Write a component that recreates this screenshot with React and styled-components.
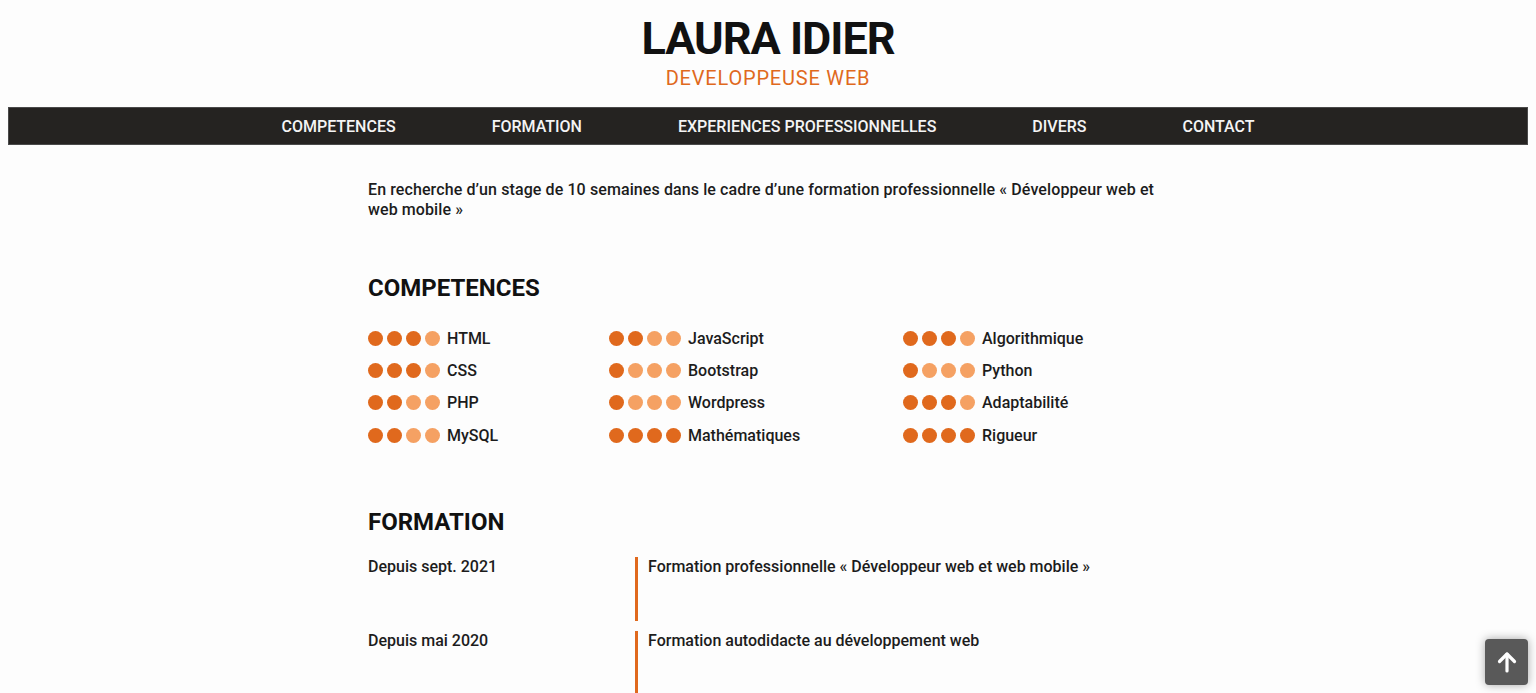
import React from 'react';
import styled, { createGlobalStyle } from 'styled-components';

const orange = '#e0691d';
const orangeLight = '#f5a163';
const ink = '#1c1c1c';

const GlobalStyle = createGlobalStyle`
  body {
    margin: 8px;
    background: #fdfdfd;
    color: ${ink};
    font-family: Roboto, "Liberation Sans", sans-serif;
  }
`;

const Header = styled.header`
  text-align: center;
`;

const Title = styled.h1`
  margin: 4px 0 0;
  font-size: 45px;
  line-height: 54px;
  font-weight: 700;
  color: #111;
  letter-spacing: -1px;
`;

const Subtitle = styled.h2`
  margin: 0;
  font-size: 20px;
  line-height: 24px;
  font-weight: 400;
  color: ${orange};
  letter-spacing: 0.8px;
`;

const Nav = styled.nav`
  margin-top: 17px;
  height: 38px;
  background: #252321;
  border: 1px solid #4a4a4a;
  box-sizing: border-box;
  display: flex;
  justify-content: center;
  align-items: center;
  gap: 96px;
`;

const NavLink = styled.a`
  color: #f4f4f4;
  font-size: 16px;
  font-weight: 500;
  text-decoration: none;
`;

const Main = styled.main`
  width: 800px;
  margin: 0 auto;
  padding-top: 35px;
  font-size: 16px;
  font-weight: 500;
`;

const Intro = styled.p`
  margin: 0;
  line-height: 20px;
  letter-spacing: 0.1px;
`;

const Section = styled.section`
  margin-top: 54px;
`;

const SectionTitle = styled.h3`
  margin: 0 0 20px;
  font-size: 24px;
  line-height: 28px;
  font-weight: 700;
  color: #111;
`;

const SkillsGrid = styled.div`
  display: grid;
  grid-template-columns: 241px 294px 1fr;
  padding-bottom: 2px;
`;

const SkillColumn = styled.ul`
  list-style: none;
  margin: 0;
  padding: 0;
`;

const SkillRow = styled.li`
  display: flex;
  align-items: center;
  height: 32.4px;
`;

const Dots = styled.span`
  display: flex;
  gap: 4px;
  margin-right: 7px;
`;

const Dot = styled.span`
  width: 15px;
  height: 15px;
  border-radius: 50%;
  background: ${(p) => (p.$filled ? orange : orangeLight)};
`;

const FormationList = styled.div`
  padding-top: 1px;
`;

const FormationRow = styled.div`
  display: grid;
  grid-template-columns: 267px 1fr;
  margin-bottom: 10px;
`;

const Period = styled.div`
  line-height: 20px;
`;

const Detail = styled.div`
  border-left: 3px solid ${orange};
  padding-left: 10px;
  min-height: 64px;
  line-height: 20px;
`;

const ScrollTop = styled.button`
  position: fixed;
  right: 8px;
  bottom: 8px;
  width: 43px;
  height: 46px;
  border: none;
  border-radius: 4px;
  background: #595959;
  box-shadow: 0 0 10px rgba(0, 0, 0, 0.35);
  display: flex;
  align-items: center;
  justify-content: center;
  padding: 0;
  cursor: pointer;
`;

const skills = [
  [
    ['HTML', 3],
    ['CSS', 3],
    ['PHP', 2],
    ['MySQL', 2],
  ],
  [
    ['JavaScript', 2],
    ['Bootstrap', 1],
    ['Wordpress', 1],
    ['Mathématiques', 4],
  ],
  [
    ['Algorithmique', 3],
    ['Python', 1],
    ['Adaptabilité', 3],
    ['Rigueur', 4],
  ],
];

const formations = [
  ['Depuis sept. 2021', 'Formation professionnelle « Développeur web et web mobile »'],
  ['Depuis mai 2020', 'Formation autodidacte au développement web'],
];

const links = ['COMPETENCES', 'FORMATION', 'EXPERIENCES PROFESSIONNELLES', 'DIVERS', 'CONTACT'];

export default function App() {
  return (
    <>
      <GlobalStyle />
      <Header>
        <Title>LAURA IDIER</Title>
        <Subtitle>DEVELOPPEUSE WEB</Subtitle>
      </Header>
      <Nav>
        {links.map((l) => (
          <NavLink key={l} href="#">{l}</NavLink>
        ))}
      </Nav>
      <Main>
        <Intro>
          En recherche d’un stage de 10 semaines dans le cadre d’une formation professionnelle « Développeur web et web mobile »
        </Intro>
        <Section>
          <SectionTitle>COMPETENCES</SectionTitle>
          <SkillsGrid>
            {skills.map((col, i) => (
              <SkillColumn key={i}>
                {col.map(([name, level]) => (
                  <SkillRow key={name}>
                    <Dots>
                      {[0, 1, 2, 3].map((d) => (
                        <Dot key={d} $filled={d < level} />
                      ))}
                    </Dots>
                    {name}
                  </SkillRow>
                ))}
              </SkillColumn>
            ))}
          </SkillsGrid>
        </Section>
        <Section>
          <SectionTitle>FORMATION</SectionTitle>
          <FormationList>
            {formations.map(([date, text]) => (
              <FormationRow key={date}>
                <Period>{date}</Period>
                <Detail>{text}</Detail>
              </FormationRow>
            ))}
          </FormationList>
        </Section>
      </Main>
      <ScrollTop aria-label="Haut de page">
        <svg width="24" height="24" viewBox="0 0 24 24" fill="none" stroke="#fff" strokeWidth="3.2" strokeLinecap="round" strokeLinejoin="round">
          <path d="M12 21V4" />
          <path d="M4.5 11.5L12 4l7.5 7.5" />
        </svg>
      </ScrollTop>
    </>
  );
}
